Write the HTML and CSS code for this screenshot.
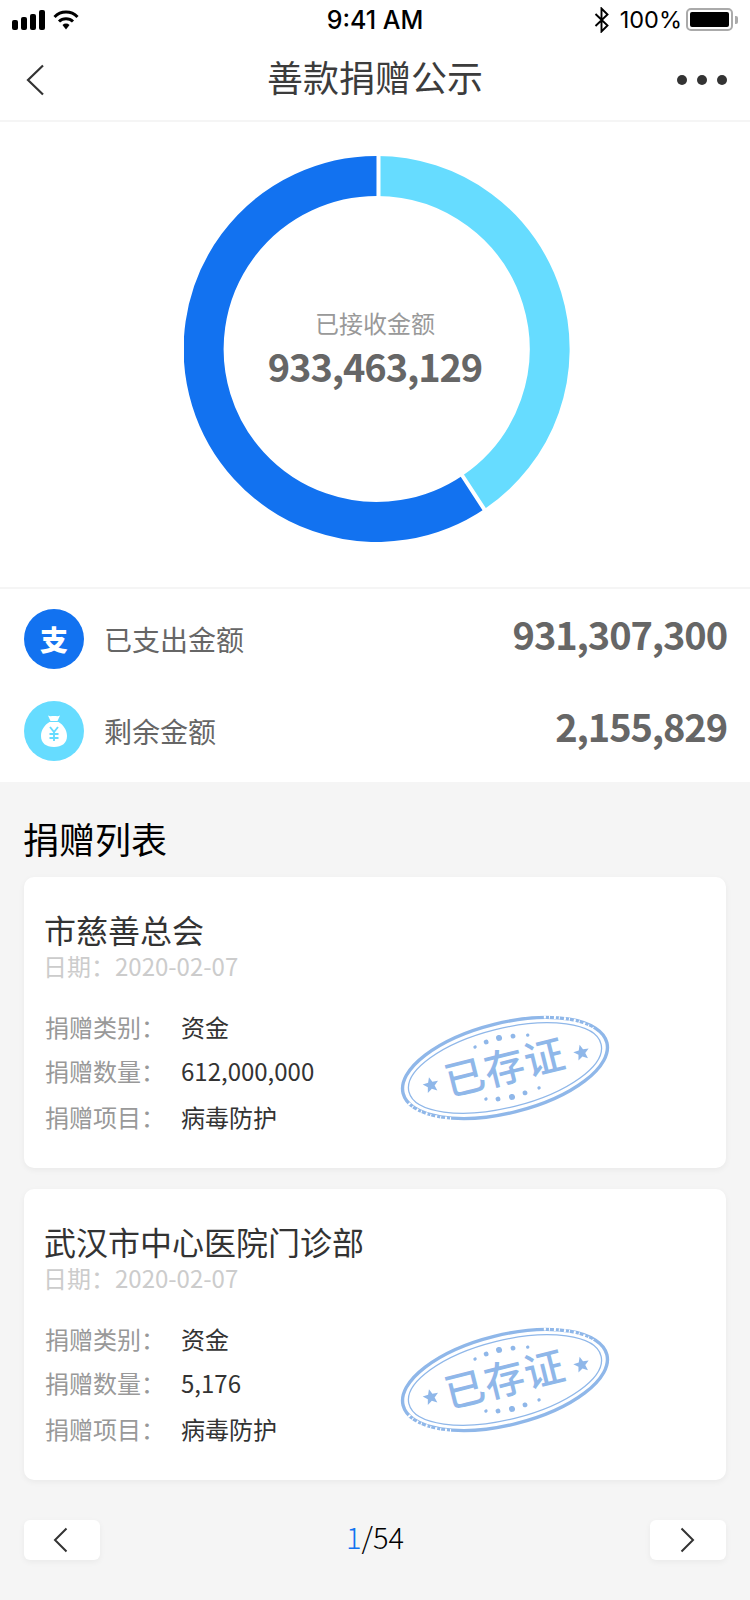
FILE: index.html
```html
<!DOCTYPE html>
<html lang="zh">
<head>
<meta charset="utf-8">
<title>善款捐赠公示</title>
<link rel="stylesheet" href="styles.css">
</head>
<body>
<header class="status">
  <div class="status-left">
    <svg width="33" height="20" viewBox="0 0 33 20"><g fill="#000"><rect x="0" y="10" width="6" height="10" rx="2"/><rect x="9" y="7" width="6" height="13" rx="2"/><rect x="18" y="4" width="6" height="16" rx="2"/><rect x="27" y="0" width="6" height="20" rx="2"/></g></svg>
    <svg width="26" height="20" viewBox="0 0 26 20"><g fill="none" stroke="#000" stroke-width="3"><path d="M1.500 7a16 16 0 0 1 23 0"/><path d="M6 11.500a10 10 0 0 1 14 0"/></g><path d="M9.500 15a5 5 0 0 1 7 0L13 19.500z" fill="#000"/></svg>
  </div>
  <div class="status-time">9:41 AM</div>
  <div class="status-right">
    <svg width="15" height="26" viewBox="0 0 15 26"><path d="M1.500 7l12 11.500-6 6V1.500l6 6-12 11.500" fill="none" stroke="#000" stroke-width="1.900"/></svg>
    <span class="battery-label">100%</span>
    <span class="battery"><span class="battery-fill"></span></span>
    <span class="battery-cap"></span>
  </div>
</header>

<nav class="navbar">
  <svg class="nav-back" width="20" height="32" viewBox="0 0 20 32"><path d="M17 1.500L2 16l15 14.500" fill="none" stroke="#333" stroke-width="2.200"/></svg>
  <h1 class="nav-title">善款捐赠公示</h1>
  <div class="dots"><i></i><i></i><i></i></div>
</nav>

<section class="chart">
  <div class="donut">
    <svg width="386" height="386" viewBox="0 0 386 386">
      <path d="M290 336A173 173 0 1 1 193 20" fill="none" stroke="#1272f0" stroke-width="40"/>
      <path d="M193 20A173 173 0 0 1 290 336" fill="none" stroke="#66dcff" stroke-width="40"/>
      <path d="M194.500 -2V44M304 359L274 313" stroke="#fff" stroke-width="4" fill="none"/>
    </svg>
    <div class="donut-label">
      <div class="donut-caption">已接收金额</div>
      <div class="donut-value">933,463,129</div>
    </div>
  </div>
</section>

<section class="summary">
  <div class="summary-row">
    <span class="badge badge-blue">支</span>
    <span class="summary-name">已支出金额</span>
    <span class="summary-value">931,307,300</span>
  </div>
  <div class="summary-row">
    <span class="badge badge-cyan">
      <svg width="32" height="34" viewBox="0 0 32 34"><path d="M10 1.500c2 1 3 .5 6 .5s4 .5 6-.5l-2.500 5.500h-7z M11.500 8h9c5 3 8.500 8 8.500 14 0 7-5 11-13 11S3 29 3 22c0-6 3.500-11 8.500-14z" fill="#fff"/><path d="M12 13l4 5 4-5M16 18v9M11.500 20h9M11.500 24h9" fill="none" stroke="#66dcff" stroke-width="1.900"/></svg>
    </span>
    <span class="summary-name">剩余金额</span>
    <span class="summary-value">2,155,829</span>
  </div>
</section>

<main class="list">
  <h2 class="list-title">捐赠列表</h2>

  <article class="card">
    <h3 class="card-title">市慈善总会</h3>
    <p class="card-date">日期：2020-02-07</p>
    <div class="field"><span class="field-key">捐赠类别：</span><span class="field-val">资金</span></div>
    <div class="field"><span class="field-key">捐赠数量：</span><span class="field-val">612,000,000</span></div>
    <div class="field field-last"><span class="field-key">捐赠项目：</span><span class="field-val">病毒防护</span></div>
    <svg class="stamp" viewBox="0 0 220 110">
      <g transform="rotate(-14 110 55)">
        <g fill="none" stroke="#8fb7e9">
          <ellipse cx="110" cy="55" rx="105" ry="45" stroke-width="3.400"/>
          <ellipse cx="110" cy="55" rx="99" ry="39.500" stroke-width="1.300"/>
          <path d="M8 66A105 45 0 0 0 48 92M160 15A105 45 0 0 1 205 38" stroke="#fff" stroke-width="3" stroke-dasharray="2 3 1 4"/>
        </g>
        <g class="stamp-ink">
          <circle cx="86" cy="27.400" r="1.700"/><circle cx="98" cy="25.200" r="2.400"/><circle cx="111.500" cy="24.400" r="3"/><circle cx="125.500" cy="26" r="2.400"/><circle cx="140" cy="28.600" r="1.700"/>
          <circle cx="84" cy="80.500" r="1.700"/><circle cx="95.700" cy="83.400" r="2.400"/><circle cx="109.800" cy="84.800" r="3"/><circle cx="123.400" cy="84" r="2.400"/><circle cx="138.200" cy="82.600" r="1.700"/>
          <path d="M34 45.500l2.200 5.300 5.700.4-4.400 3.700 1.400 5.600-4.900-3-4.900 3 1.400-5.600-4.400-3.700 5.700-.4z"/>
          <path d="M188 50.500l2.200 5.300 5.700.4-4.400 3.700 1.400 5.600-4.900-3-4.900 3 1.400-5.600-4.400-3.700 5.700-.4z"/>
          <text x="110" y="69" text-anchor="middle" class="stamp-text">已存证</text>
        </g>
      </g>
    </svg>
  </article>

  <article class="card">
    <h3 class="card-title">武汉市中心医院门诊部</h3>
    <p class="card-date">日期：2020-02-07</p>
    <div class="field"><span class="field-key">捐赠类别：</span><span class="field-val">资金</span></div>
    <div class="field"><span class="field-key">捐赠数量：</span><span class="field-val">5,176</span></div>
    <div class="field field-last"><span class="field-key">捐赠项目：</span><span class="field-val">病毒防护</span></div>
    <svg class="stamp" viewBox="0 0 220 110">
      <g transform="rotate(-14 110 55)">
        <g fill="none" stroke="#8fb7e9">
          <ellipse cx="110" cy="55" rx="105" ry="45" stroke-width="3.400"/>
          <ellipse cx="110" cy="55" rx="99" ry="39.500" stroke-width="1.300"/>
          <path d="M8 66A105 45 0 0 0 48 92M160 15A105 45 0 0 1 205 38" stroke="#fff" stroke-width="3" stroke-dasharray="2 3 1 4"/>
        </g>
        <g class="stamp-ink">
          <circle cx="86" cy="27.400" r="1.700"/><circle cx="98" cy="25.200" r="2.400"/><circle cx="111.500" cy="24.400" r="3"/><circle cx="125.500" cy="26" r="2.400"/><circle cx="140" cy="28.600" r="1.700"/>
          <circle cx="84" cy="80.500" r="1.700"/><circle cx="95.700" cy="83.400" r="2.400"/><circle cx="109.800" cy="84.800" r="3"/><circle cx="123.400" cy="84" r="2.400"/><circle cx="138.200" cy="82.600" r="1.700"/>
          <path d="M34 45.500l2.200 5.300 5.700.4-4.400 3.700 1.400 5.600-4.900-3-4.900 3 1.400-5.600-4.400-3.700 5.700-.4z"/>
          <path d="M188 50.500l2.200 5.300 5.700.4-4.400 3.700 1.400 5.600-4.900-3-4.900 3 1.400-5.600-4.400-3.700 5.700-.4z"/>
          <text x="110" y="69" text-anchor="middle" class="stamp-text">已存证</text>
        </g>
      </g>
    </svg>
  </article>

  <div class="pager">
    <button class="page-btn"><svg class="arrow-prev" width="16" height="26" viewBox="0 0 16 26"><path d="M14.500 1.500L3 13l11.500 11.500" fill="none" stroke="#333" stroke-width="2"/></svg></button>
    <div class="page-num"><span class="page-current">1</span>/54</div>
    <button class="page-btn"><svg width="16" height="26" viewBox="0 0 16 26"><path d="M1.500 1.500L13 13 1.500 24.500" fill="none" stroke="#333" stroke-width="2"/></svg></button>
  </div>
</main>
</body>
</html>
```

FILE: styles.css
```css
* { box-sizing: border-box; }
html, body { margin: 0; padding: 0; }
body {
  width: 750px;
  height: 1600px;
  overflow: hidden;
  background: #f5f5f5;
  font-family: "Noto Sans CJK SC", "Noto Sans", sans-serif;
  color: #333;
}

.status {
  height: 40px;
  background: #fff;
  padding: 0 12px;
  display: grid;
  grid-template-columns: 1fr auto 1fr;
  align-items: center;
  font-family: "Inter", "Liberation Sans", sans-serif;
  color: #000;
}
.status-left { display: flex; align-items: center; gap: 8px; }
.status-time { font-size: 25px; font-weight: 500; margin-top: -1px; }
.status-right { display: flex; align-items: center; justify-content: flex-end; margin: -1px 0 0; }
.battery-label { font-size: 23.5px; margin: 0 4px 0 11px; }
.battery {
  width: 47px; height: 23px; padding: 2px;
  border: 2px solid #aaa; border-radius: 5px; display: block;
}
.battery-fill { display: block; height: 100%; background: #000; border-radius: 2px; }
.battery-cap { width: 3px; height: 8px; margin-left: 2px; background: #aaa; border-radius: 0 2px 2px 0; }

.navbar {
  height: 82px;
  background: #fff;
  border-bottom: 2px solid #f5f5f5;
  padding: 0 23px 0 26px;
  display: grid;
  grid-template-columns: 1fr auto 1fr;
  align-items: center;
}
.nav-title { margin: -6px 0 0 -3px; font-size: 36px; font-weight: 400; color: #3c3c3c; line-height: 1.2; }
.dots { display: flex; gap: 10px; justify-content: flex-end; }
.dots i { width: 10px; height: 10px; border-radius: 50%; background: #333; display: block; }

.chart {
  height: 467px;
  background: #fff;
  border-bottom: 2px solid #f5f5f5;
  display: flex;
  justify-content: center;
  padding: 34px 0 0 3px;
}
.donut { position: relative; width: 386px; height: 386px; }
.donut-label {
  position: absolute; inset: 0 3px 0 0;
  display: flex; flex-direction: column; align-items: center; justify-content: center;
}
.donut-caption { font-size: 24px; color: #999; line-height: 32px; }
.donut-value { font-size: 38px; font-weight: 700; color: #666; line-height: 50px; letter-spacing: -1.1px; margin-top: 2px; }

.summary { background: #fff; height: 193px; padding: 20px 24px 0; display: flex; flex-direction: column; gap: 32px; }
.summary-row { display: flex; align-items: center; height: 60px; }
.badge {
  width: 60px; height: 60px; border-radius: 50%;
  display: flex; align-items: center; justify-content: center;
  flex: none;
}
.badge-blue { background: #1272f0; color: #fff; font-size: 28px; font-weight: 900; }
.badge-cyan { background: #66dcff; }
.summary-name { font-size: 28px; color: #666; margin-left: 20px; }
.summary-value { margin: -10px -1px 0 auto; font-size: 38px; font-weight: 700; letter-spacing: -1.1px; color: #666; line-height: 1; }

.list { padding: 0 24px; }
.list-title { margin: 0 0 0 -1px; padding-top: 31px; height: 95px; font-size: 36px; font-weight: 400; color: #000; line-height: 50px; }

.card {
  position: relative;
  height: 291px;
  margin-bottom: 21px;
  padding: 33px 21px 0;
  background: #fff;
  border-radius: 10px;
  box-shadow: 0 2px 6px rgba(0,0,0,.05);
}
.card-title { margin: 0 0 0 -1px; font-size: 32px; font-weight: 400; line-height: 38px; color: #333; }
.card-date { margin: 2px 0 28px -2px; font-size: 24px; color: #ccc; line-height: 32px; }
.field { display: flex; font-size: 24px; line-height: 34px; margin-bottom: 10px; }
.field-last { margin-top: 12px; margin-bottom: 0; }
.field-key { width: 136px; color: #999; flex: none; }
.field-val { color: #333; }
.stamp { position: absolute; left: 371px; top: 136px; width: 220px; height: 110px; }
.stamp-ink { fill: #8fb7e9; }
.stamp-text { font-family: "Noto Sans CJK SC", sans-serif; font-size: 40px; font-weight: 500; letter-spacing: 1px; }

.pager { display: flex; align-items: center; justify-content: space-between; margin-top: 40px; }
.page-btn {
  width: 76px; height: 40px; padding: 0; border: 0;
  background: #fff; border-radius: 6px;
  box-shadow: 0 2px 6px rgba(0,0,0,.05);
  display: flex; align-items: center; justify-content: center;
}
.arrow-prev { margin-right: 4px; }
.page-num { font-size: 29px; color: #000; line-height: 40px; font-weight: 300; margin-top: -8px; }
.page-current { color: #1272f0; }
```
